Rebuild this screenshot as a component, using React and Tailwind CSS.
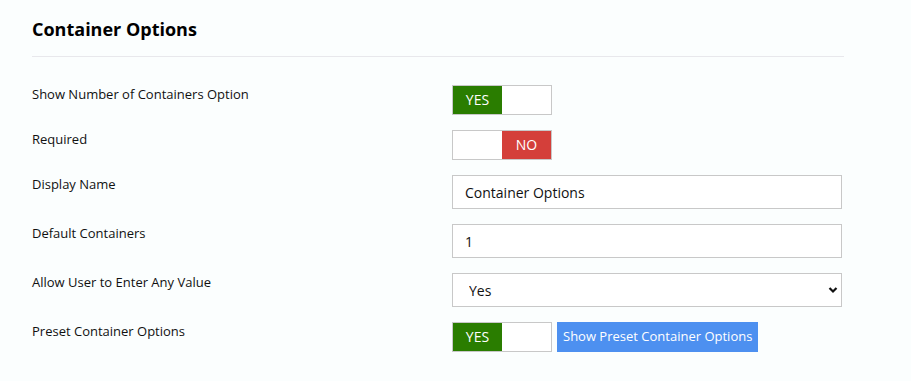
import React, { useState } from 'react';

const Toggle = ({ value, onChange }) => (
    <button
        type="button"
        onClick={() => onChange(!value)}
        className="flex w-[100px] h-[30px] border border-[#c8c8c8] bg-white shrink-0"
    >
        {value ? (
            <>
                <span className="w-[49px] h-full bg-[#2a7d00] text-white text-[14px] leading-[28px] text-center">YES</span>
                <span className="flex-1" />
            </>
        ) : (
            <>
                <span className="flex-1" />
                <span className="w-[49px] h-full bg-[#d43f3a] text-white text-[14px] leading-[28px] text-center">NO</span>
            </>
        )}
    </button>
);

const Row = ({ label, children }) => (
    <div className="flex items-start mb-[15px]">
        <label className="w-[420px] text-[13px] leading-[18px] text-[#111] shrink-0">{label}</label>
        <div className="flex items-center w-[390px]">{children}</div>
    </div>
);

const App = () => {
    const [showNumber, setShowNumber] = useState(true);
    const [required, setRequired] = useState(false);
    const [preset, setPreset] = useState(true);
    const [displayName, setDisplayName] = useState('Container Options');
    const [defaultCount, setDefaultCount] = useState('1');
    const [allowAny, setAllowAny] = useState('Yes');

    return (
        <div className="min-h-screen bg-[#fbfefe] pl-[32px] pt-[17px] text-[#111]" style={{ fontFamily: '"Open Sans", sans-serif' }}>
            <div className="w-[812px]">
                <h2 className="text-[18px] leading-[24px] font-bold text-black pb-[15px] border-b border-[#e8e8ec]">Container Options</h2>
                <div className="pt-[28px]">
                    <Row label="Show Number of Containers Option">
                        <Toggle value={showNumber} onChange={setShowNumber} />
                    </Row>
                    <Row label="Required">
                        <Toggle value={required} onChange={setRequired} />
                    </Row>
                    <Row label="Display Name">
                        <input
                            type="text"
                            value={displayName}
                            onChange={(e) => setDisplayName(e.target.value)}
                            className="w-full h-[34px] border border-[#c8c8c8] bg-white px-[12px] text-[14px] outline-none"
                        />
                    </Row>
                    <Row label="Default Containers">
                        <input
                            type="text"
                            value={defaultCount}
                            onChange={(e) => setDefaultCount(e.target.value)}
                            className="w-full h-[34px] border border-[#c8c8c8] bg-white px-[12px] text-[14px] outline-none"
                        />
                    </Row>
                    <Row label="Allow User to Enter Any Value">
                        <div className="relative w-full">
                            <select
                                value={allowAny}
                                onChange={(e) => setAllowAny(e.target.value)}
                                className="w-full h-[34px] border border-[#c8c8c8] bg-white pl-[16px] text-[14px] appearance-none outline-none"
                            >
                                <option>Yes</option>
                                <option>No</option>
                            </select>
                            <svg className="absolute right-[4px] top-[13px] pointer-events-none" width="10" height="8" viewBox="0 0 10 8">
                                <path d="M1.5 2 L5 5.5 L8.5 2" fill="none" stroke="#111" strokeWidth="2.2" />
                            </svg>
                        </div>
                    </Row>
                    <Row label="Preset Container Options">
                        <Toggle value={preset} onChange={setPreset} />
                        <button className="ml-[5px] h-[30px] px-[6px] bg-[#4d90f0] text-white text-[13px]">Show Preset Container Options</button>
                    </Row>
                </div>
            </div>
        </div>
    );
};

export default App;
